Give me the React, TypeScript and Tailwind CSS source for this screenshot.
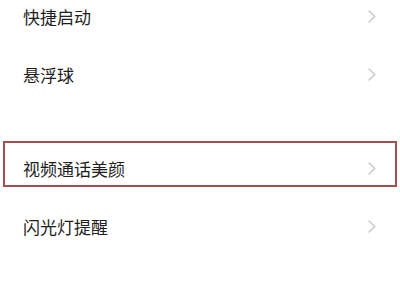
import React from 'react';

function Chevron() {
  return (
    <svg width="8" height="13" viewBox="0 0 8 13" fill="none" className="shrink-0" aria-hidden>
      <path d="M1 1 L6.8 6.5 L1 12" stroke="#c6c6c6" strokeWidth="1.4" strokeLinecap="round" strokeLinejoin="round" />
    </svg>
  );
}

function Row({ label, className = '' }: { label: string; className?: string }) {
  return (
    <div className={`flex h-[57.5px] items-center justify-between pl-[23px] pr-[24px] ${className}`}>
      <span className="text-[17px] leading-none text-[#1e1e1e]">{label}</span>
      <Chevron />
    </div>
  );
}

export default function App() {
  return (
    <div
      className="h-[300px] w-[400px] overflow-hidden bg-white"
      style={{ fontFamily: '"Noto Sans CJK SC", "Noto Sans", sans-serif' }}
    >
      <div className="mt-[-12.25px] flex flex-col">
        <Row label="快捷启动" />
        <Row label="悬浮球" />
      </div>

      <div className="mt-[37px] flex flex-col">
        <div className="h-[57.5px] pt-[1.25px]">
          <div className="mx-[3px] flex h-[46px] items-center justify-between border-2 border-[#a44f4c] pl-[18px] pr-[19px] pt-[9px]">
            <span className="text-[17px] leading-none text-[#1e1e1e]">视频通话美颜</span>
            <Chevron />
          </div>
        </div>
        <Row label="闪光灯提醒" />
      </div>
    </div>
  );
}
